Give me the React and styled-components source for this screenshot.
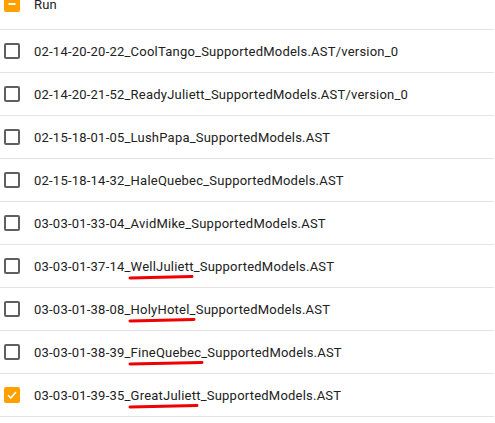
import React from "react";
import styled, { createGlobalStyle } from "styled-components";

const Global = createGlobalStyle`
  html, body { margin: 0; padding: 0; background: #fff; }
  body { font-family: Roboto, "Noto Sans", "Liberation Sans", sans-serif; overflow: hidden; }
`;

const List = styled.div`
  width: 494px;
  margin-top: -21px;
`;

const Row = styled.label`
  display: flex;
  align-items: center;
  height: ${(p) => (p.$header ? "50px" : "42px")};
  border-bottom: 1px solid #e4e4e4;
  padding-left: 4px;
  box-sizing: content-box;
  font-size: 13px;
  color: #212121;
  cursor: pointer;
`;

const Box = styled.span`
  width: 16px;
  height: 16px;
  box-sizing: border-box;
  border-radius: 2px;
  border: ${(p) => (p.$on ? "none" : "2px solid #5f5f5f")};
  background: ${(p) => (p.$on ? "#ffa000" : "transparent")};
  display: flex;
  align-items: center;
  justify-content: center;
  flex: none;
  margin-right: 14px;
`;

const Label = styled.span`
  white-space: nowrap;
  letter-spacing: 0.22px;
`;

const Marked = styled.span`
  position: relative;
`;

const Stroke = styled.svg`
  position: absolute;
  left: -2px;
  top: 100%;
  margin-top: 0px;
  overflow: visible;
  pointer-events: none;
`;

const rows = [
  ["02-14-20-20-22", "CoolTango", "SupportedModels.AST/version_0"],
  ["02-14-20-21-52", "ReadyJuliett", "SupportedModels.AST/version_0"],
  ["02-15-18-01-05", "LushPapa", "SupportedModels.AST"],
  ["02-15-18-14-32", "HaleQuebec", "SupportedModels.AST"],
  ["03-03-01-33-04", "AvidMike", "SupportedModels.AST"],
  ["03-03-01-37-14", "WellJuliett", "SupportedModels.AST", 64],
  ["03-03-01-38-08", "HolyHotel", "SupportedModels.AST", 66],
  ["03-03-01-38-39", "FineQuebec", "SupportedModels.AST", 74],
  ["03-03-01-39-35", "GreatJuliett", "SupportedModels.AST", 69, true],
];

function Check({ on }) {
  return (
    <Box $on={on}>
      {on && (
        <svg width="12" height="12" viewBox="0 0 12 12">
          <path d="M2 6.2 L4.8 9 L10 3" fill="none" stroke="#fff" strokeWidth="1.6" />
        </svg>
      )}
    </Box>
  );
}

function Underline({ w }) {
  return (
    <Stroke width={w} height="6" viewBox={`0 0 ${w} 6`}>
      <path d={`M1 4 L${w - 1} 2.4`} stroke="#f00000" strokeWidth="3" strokeLinecap="round" />
    </Stroke>
  );
}

export default function App() {
  return (
    <>
      <Global />
      <List>
        <Row $header>
          <Box $on>
            <svg width="12" height="12" viewBox="0 0 12 12">
              <path d="M2.5 6 H9.5" stroke="#fff" strokeWidth="2" />
            </svg>
          </Box>
          <Label>Run</Label>
        </Row>
        {rows.map(([d, n, s, w, on]) => (
          <Row key={d + n}>
            <Check on={on} />
            <Label>
              {d}_
              {w ? (
                <Marked>
                  {n}
                  <Underline w={w} />
                </Marked>
              ) : (
                n
              )}
              _{s}
            </Label>
          </Row>
        ))}
      </List>
    </>
  );
}
